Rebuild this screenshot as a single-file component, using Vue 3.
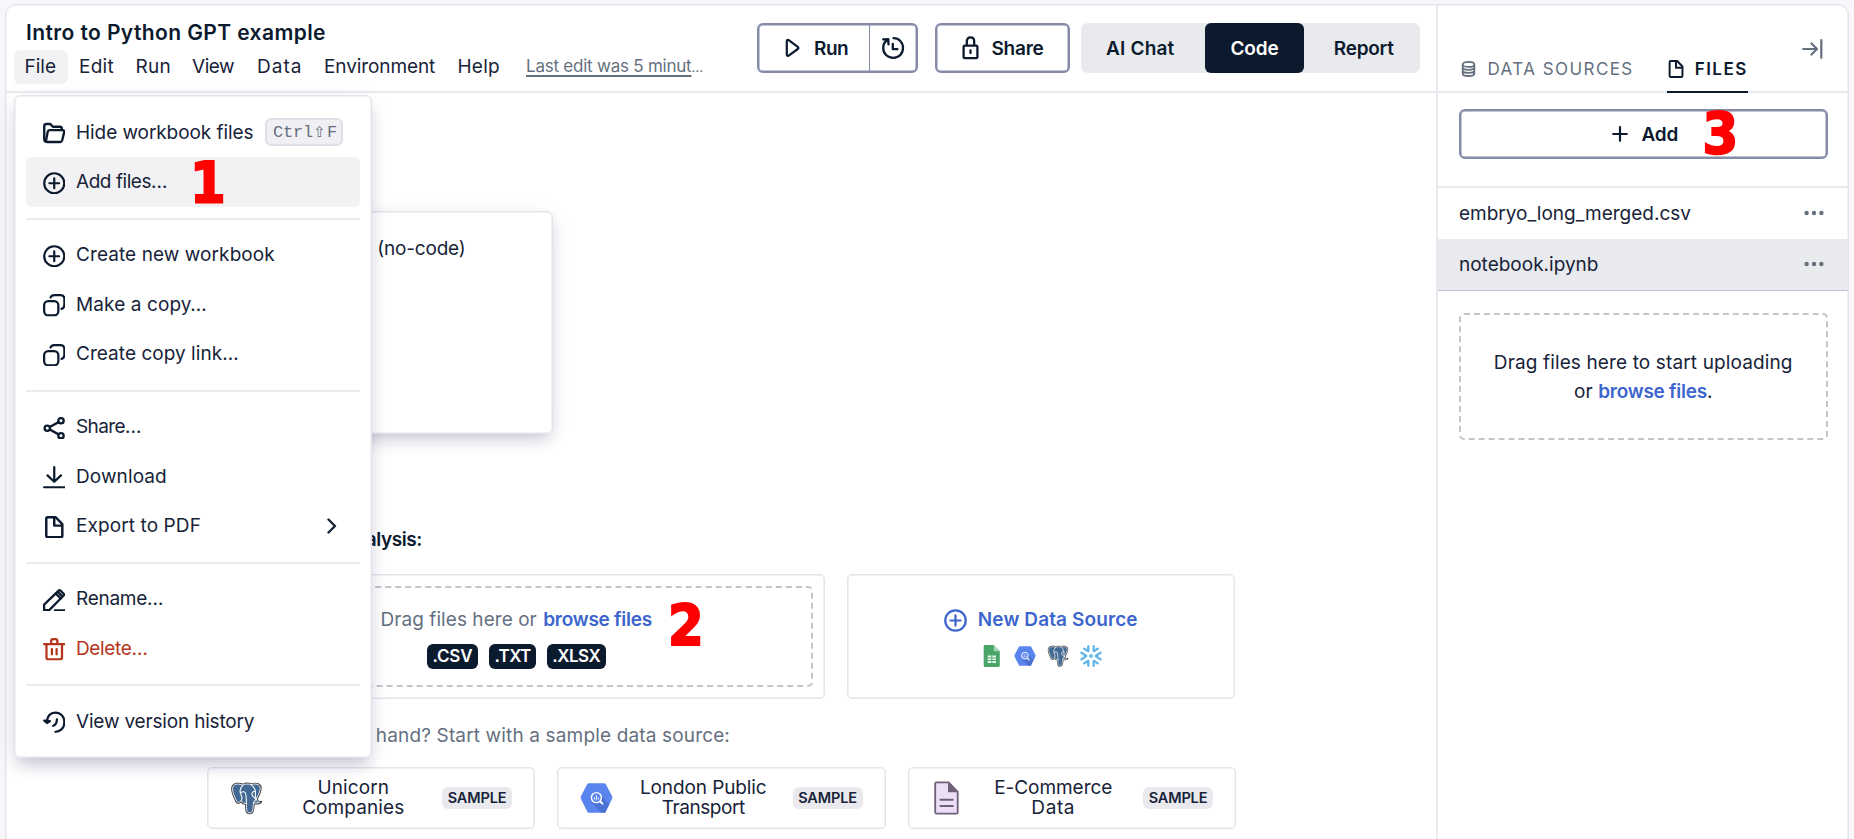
<script setup>
const menubar = [
  { label: 'File', x: 'file' },
  { label: 'Edit', x: 'edit' },
  { label: 'Run', x: 'run' },
  { label: 'View', x: 'view' },
  { label: 'Data', x: 'data' },
  { label: 'Environment', x: 'environment' },
  { label: 'Help', x: 'help' },
]

const groups = [
  [
    { icon: 'folder', label: 'Hide workbook files', cls: 'hide', kbd: ['Ctrl', '⇧', 'F'] },
    { icon: 'plus', label: 'Add files…', cls: 'add', active: true },
  ],
  [
    { icon: 'plus', label: 'Create new workbook', cls: 'create' },
    { icon: 'copy', label: 'Make a copy…', cls: 'make' },
    { icon: 'copy', label: 'Create copy link…', cls: 'link' },
  ],
  [
    { icon: 'share', label: 'Share…', cls: 'share' },
    { icon: 'download', label: 'Download', cls: 'download' },
    { icon: 'file', label: 'Export to PDF', cls: 'export', chevron: true },
  ],
  [
    { icon: 'pen', label: 'Rename…', cls: 'rename' },
    { icon: 'trash', label: 'Delete…', cls: 'delete', danger: true },
  ],
  [{ icon: 'history', label: 'View version history', cls: 'history' }],
]

const samples = [
  { logo: 'postgres', lines: ['Unicorn', 'Companies'], cls: 'unicorn' },
  { logo: 'bigquery', lines: ['London Public', 'Transport'], cls: 'london' },
  { logo: 'doc', lines: ['E-Commerce', 'Data'], cls: 'ecommerce' },
]

const files = [
  { name: 'embryo_long_merged.csv' },
  { name: 'notebook.ipynb', selected: true },
]
</script>

<template>
  <div class="app">
    <svg class="defs" width="0" height="0" aria-hidden="true">
      <defs>
        <symbol id="i-folder" viewBox="0 0 22 22">
          <g fill="none" stroke="currentColor" stroke-width="2.3" stroke-linejoin="round" stroke-linecap="round">
            <path d="M3 19.4C1.8 19 1.2 18.2 1.2 17V4.2C1.2 2.8 2.1 2 3.4 2H7.2L9.6 4.6H16.3C17.6 4.6 18.4 5.4 18.4 6.6V7.6" />
            <path d="M6.4 8H19.2C20.4 8 21 8.8 20.7 9.9L18.8 17.9C18.5 19 17.9 19.6 16.8 19.6H4.4C3.2 19.6 2.7 18.8 3 17.8L4.6 9.6C4.8 8.5 5.4 8 6.4 8Z" />
          </g>
        </symbol>
        <symbol id="i-plus" viewBox="0 0 22 22">
          <g fill="none" stroke="currentColor" stroke-width="2.15" stroke-linecap="round">
            <circle cx="11" cy="11" r="9.8" />
            <path d="M11 6.2V15.8M6.2 11H15.8" />
          </g>
        </symbol>
        <symbol id="i-copy" viewBox="0 0 22 22">
          <g fill="none" stroke="currentColor" stroke-width="2.2" stroke-linecap="round">
            <rect x="1.1" y="7" width="13.9" height="13.9" rx="4" />
            <path d="M7.4 3.4C8 1.8 9.2 1.1 11 1.1H16.9C19.4 1.1 20.9 2.5 20.9 5V10.5C20.9 12.6 20 14 18.2 14.5" />
          </g>
        </symbol>
        <symbol id="i-share" viewBox="0 0 22 22">
          <g fill="none" stroke="currentColor" stroke-width="2.3">
            <circle cx="17.6" cy="3.7" r="2.6" />
            <circle cx="4.2" cy="11" r="2.6" />
            <circle cx="17.6" cy="18.3" r="2.6" />
            <path d="M6.6 9.7L15.2 5M6.6 12.3L15.2 17" />
          </g>
        </symbol>
        <symbol id="i-download" viewBox="0 0 22 22">
          <path d="M11 1.1V15M4.4 9.2L11 15.4L17.6 9.2M1.1 20.800H20.900" fill="none" stroke="currentColor" stroke-width="2.2" stroke-linecap="round" stroke-linejoin="round" />
        </symbol>
        <symbol id="i-file" viewBox="0 0 22 22">
          <g fill="none" stroke="currentColor" stroke-width="2.4" stroke-linejoin="round">
            <path d="M4.600 1.200H12.400L18.900 8V19.200C18.900 20.200 18.300 20.800 17.300 20.800H4.800C3.800 20.800 3.200 20.200 3.200 19.200V2.700C3.200 1.800 3.700 1.200 4.600 1.200Z" />
            <path d="M11 1.600V9.400H18.600" />
          </g>
        </symbol>
        <symbol id="i-pen" viewBox="0 0 22 22">
          <g fill="none" stroke="currentColor" stroke-width="2.2" stroke-linejoin="round" stroke-linecap="round">
            <path d="M1.100 20.700V15.300L15.300 1.600C15.900 1 16.500 1 17.100 1.600L20.200 4.600C20.800 5.200 20.800 5.800 20.200 6.400L6.600 20.200C6.300 20.500 6 20.700 5.500 20.700H1.100Z" />
            <path d="M12.600 4.600L17.300 9.200M11.600 20.800H20.900M15.400 3.600L18 6.200" />
          </g>
        </symbol>
        <symbol id="i-trash" viewBox="0 0 22 22">
          <g fill="none" stroke="currentColor" stroke-width="2.2" stroke-linejoin="round" stroke-linecap="round">
            <path d="M1.100 6H20.900M3.400 6V19C3.400 20.200 4 20.900 5.300 20.900H16.700C18 20.900 18.600 20.200 18.600 19V6M8 5.400V3.200C8 1.800 8.600 1.100 10 1.100H12C13.400 1.100 14 1.800 14 3.200V5.400M8.700 10.800V16M13.300 10.800V16" />
          </g>
        </symbol>
        <symbol id="i-history" viewBox="0 0 22 22">
          <g fill="none" stroke="currentColor" stroke-width="2.200" stroke-linecap="round" stroke-linejoin="round">
            <path d="M3.600 10.400C4.400 4.800 7.600 1.500 12 1.500C17.200 1.500 20.900 5.600 20.900 10.900C20.900 16.400 17.200 20.300 12.200 20.300" />
            <path d="M1.200 9.400L3.900 11.700L6.800 9.800Z" fill="currentColor" />
            <path d="M13.600 8.200C13.600 11.200 12.800 13.200 10 14.400" />
          </g>
        </symbol>
        <symbol id="i-postgres" viewBox="0 0 34 34">
          <path d="M1.200 7C1.400 3 5 .8 9 1.300C11 1.500 12 1.800 13.200 2.200C16 .9 19 .8 21.600 1.800C25.500 .6 30 1 32 3.800C34 7.600 31 14 28.600 18C29.600 20.200 31 20.200 33 20C33.600 22.600 29.500 24 25.400 23.700C25 28 25.300 33.500 20.600 33.800C15.800 34 15.600 30 15.600 24C13.600 23.600 12 22.600 11.200 21.600C9.500 24 6.500 23.400 5 19.800C3 15.400 1 11 1.200 7Z" fill="#3b3b3b" />
          <path d="M2.600 7C2.800 3.800 5.800 2.200 9.200 2.700C11 2.900 12 3.200 13.300 3.700C16 2.300 19 2.200 21.600 3.200C25.200 2 29 2.400 30.700 4.700C32.200 7.800 29.500 13.600 27.200 17.600C27.400 20 28.800 21.200 30.600 21.300C29.200 22.300 26.500 22.500 24.200 22C23.600 27 24.200 32.200 20.600 32.400C16.800 32.600 17 28.600 17 22.800C14.800 23 12.600 21.600 11.600 19.600C9.800 22.400 7.400 22 6.200 19.200C4.400 15 2.400 10.800 2.600 7Z" fill="#426894" stroke="#fff" stroke-width=".9" />
          <path d="M13.300 3.700C10 7 10 11 11.400 13.600C12.800 16.500 12.600 18 11.600 19.600M21.600 3.200C25.400 6 26.500 9.500 26.200 12.600C26 15 26.200 16.600 27.200 17.600C26.200 19.400 24.800 20.600 24.200 22M11.200 11.400C13 10.200 15 10.200 16 12C17 15 16.600 20 17 22.800M26.200 10.600C24.500 10 22.800 10.600 22.600 12.600C22.400 14.800 24 16 26.200 17.600" fill="none" stroke="#fff" stroke-width="1.100" stroke-linecap="round" />
        </symbol>
        <symbol id="i-bigquery" viewBox="0 0 33 32">
          <path d="M9.200 1.200H23.800C24.800 1.200 25.300 1.500 25.800 2.300L32 14C32.500 15 32.500 16 32 17L25.800 29.500C25.400 30.400 24.800 30.800 23.800 30.800H9.200C8.200 30.800 7.600 30.400 7.200 29.500L1 17C.5 16 .5 15 1 14L7.200 2.300C7.700 1.500 8.200 1.200 9.200 1.200Z" fill="#5a84ee" />
          <path d="M20.500 12.500L29.200 22.500L25.800 29.500C25.400 30.400 24.800 30.800 23.800 30.800H21.500L12 20.800Z" fill="#4b71d2" />
          <circle cx="16.400" cy="15.600" r="5" fill="#5a84ee" stroke="#fff" stroke-width="1.400" />
          <path d="M20.300 19.500L22.400 21.700" stroke="#fff" stroke-width="1.900" stroke-linecap="round" />
          <path d="M14.400 15.400V17.400M16.400 13.400V18.300M18.400 15.800V17.400" stroke="#fff" stroke-width="1" />
        </symbol>
        <symbol id="i-doc" viewBox="0 0 25 34">
          <path d="M2.600 1.300H14.600L23.700 10.800V31.200C23.700 32.100 23.200 32.700 22.300 32.700H2.600C1.700 32.700 1.200 32.100 1.200 31.200V2.700C1.200 1.800 1.700 1.300 2.600 1.300Z" fill="#ebdef5" stroke="#6d6078" stroke-width="1.800" />
          <path d="M14 1.300V11.300H23.700Z" fill="#6d6078" />
          <path d="M6.400 18.700H18.800M6.400 25H18.800" stroke="#6d6078" stroke-width="2" stroke-linecap="round" />
        </symbol>
      </defs>
    </svg>

    <div class="frame">
      <main class="main">
        <header class="top">
          <div class="heading">
            <h1>Intro to Python GPT example</h1>
            <nav class="menubar">
              <span v-for="m in menubar" :key="m.label" :class="['mb', m.x]">{{ m.label }}</span>
              <span class="last"><u>Last edit was 5 minut</u><small>…</small></span>
            </nav>
          </div>
          <div class="actions">
            <div class="btn run-btn">
              <span class="run-main">
                <svg width="16" height="20" viewBox="0 0 16 20"><path d="M1.800 3.200C1.800 2.100 2.800 1.600 3.700 2.200L12.800 8.800C13.600 9.400 13.600 10.400 12.800 11L3.700 17.700C2.800 18.300 1.800 17.800 1.800 16.700Z" fill="none" stroke="currentColor" stroke-width="2.200" /></svg>
                <b>Run</b>
              </span>
              <span class="run-side">
                <svg width="24" height="24" viewBox="0 0 24 24" fill="none" stroke="currentColor" stroke-width="2.300" stroke-linecap="round" stroke-linejoin="round"><path d="M12.600 2.200C18 2.200 22 6.400 22 12C22 17.600 18 21.800 12.200 21.800C6.400 21.800 2.200 17.600 2.200 12C2.200 8.600 3.700 5.600 6.600 3.700M2.200 3.400L7.300 3.200L7.500 8.400M11.800 8V13.200H16.400" /></svg>
              </span>
            </div>
            <div class="btn share-btn">
              <svg width="17" height="24" viewBox="0 0 17 24" fill="none" stroke="currentColor" stroke-width="2.300" stroke-linecap="round"><rect x="1.600" y="9.600" width="13.800" height="12.600" rx="1.200" /><path d="M4.800 9V5.400C4.800 3 6.200 1.400 8.500 1.400C10.800 1.400 12.200 3 12.200 5.400V9M8.500 14.400V17" /></svg>
              <b>Share</b>
            </div>
            <div class="toggle">
              <b class="t-chat">AI Chat</b>
              <b class="t-code">Code</b>
              <b class="t-report">Report</b>
            </div>
          </div>
        </header>

        <section class="canvas">
          <div class="popup"><span>(no-code)</span></div>

          <h2>analysis:</h2>
          <div class="row">
            <div class="card upload">
              <div class="dashed">
                <p class="drag">Drag files here or <b>browse files</b></p>
                <div class="chips"><b>.CSV</b><b>.TXT</b><b>.XLSX</b></div>
              </div>
            </div>
            <div class="card source">
              <div class="new"><svg width="23" height="23"><use href="#i-plus" /></svg><b>New Data Source</b></div>
              <div class="logos">
                <svg width="22" height="22" viewBox="0 0 22 22">
                  <path d="M4 0H12.500L18.800 6.200V20.600C18.800 21.400 18.300 22 17.500 22H4C3.200 22 2.700 21.400 2.700 20.600V1.400C2.700 .6 3.200 0 4 0Z" fill="#49a568" />
                  <path d="M12.800 0L18.800 6.200H12.800Z" fill="#a5d3b4" />
                  <path d="M6.700 10.500H15V18H6.700Z" fill="#e6f4ea" />
                  <path d="M6.700 13H15M6.700 15.500H15M10.800 10.500V18" stroke="#49a568" stroke-width=".9" />
                </svg>
                <svg width="22" height="22"><use href="#i-bigquery" /></svg>
                <svg width="22" height="22"><use href="#i-postgres" /></svg>
                <svg width="22" height="22" viewBox="0 0 22 22" fill="none" stroke="#5cb3e4" stroke-width="2.200" stroke-linecap="round" stroke-linejoin="round">
                  <path d="M8.300 1.200V6.200L4.200 3.600M13.700 1.200V6.200L17.800 3.600M8.300 20.800V15.800L4.200 18.400M13.700 20.800V15.800L17.800 18.400M1.400 7.600L6.300 11L1.400 14.400M20.600 7.600L15.700 11L20.600 14.400" />
                  <path d="M11 9.400L12.600 11L11 12.600L9.400 11Z" stroke-width="1.200" />
                </svg>
              </div>
            </div>
          </div>
          <p class="hint">No data at hand? Start with a sample data source:</p>
          <div class="row samples">
            <div v-for="s in samples" :key="s.cls" :class="['card', 'sample', s.cls]">
              <svg class="logo"><use :href="'#i-' + s.logo" /></svg>
              <div class="name"><span v-for="l in s.lines" :key="l">{{ l }}</span></div>
              <b class="tag">SAMPLE</b>
            </div>
          </div>
        </section>
      </main>

      <aside class="side">
        <div class="tabs">
          <div class="tab">
            <svg width="15" height="16" viewBox="0 0 15 16" fill="none" stroke="currentColor" stroke-width="1.800"><ellipse cx="7.500" cy="3.400" rx="5.800" ry="2.500" /><path d="M1.700 3.400V12.400C1.700 13.900 4.200 15 7.500 15C10.800 15 13.300 13.900 13.300 12.400V3.400M1.700 6.600C1.700 8 4.200 8.800 7.500 8.800C10.800 8.800 13.300 8 13.300 6.600M1.700 9.600C1.700 11 4.200 11.900 7.500 11.900C10.800 11.900 13.300 11 13.300 9.600" /></svg>
            <span>DATA SOURCES</span>
          </div>
          <div class="tab on">
            <svg width="18" height="18"><use href="#i-file" /></svg>
            <span>FILES</span>
          </div>
          <svg class="collapse" width="21" height="20" viewBox="0 0 21 20" fill="none" stroke="currentColor" stroke-width="2.200" stroke-linecap="round" stroke-linejoin="round"><path d="M1.200 10H14.500M9.500 4.400L15 10L9.500 15.600M19.300 1.200V18.800" /></svg>
        </div>
        <div class="add-wrap">
          <div class="btn add-btn">
            <svg width="16" height="16" viewBox="0 0 16 16"><path d="M8 1.200V14.800M1.200 8H14.800" stroke="currentColor" stroke-width="2.200" stroke-linecap="round" /></svg>
            <b>Add</b>
            <span class="mark m3">3</span>
          </div>
        </div>
        <div v-for="f in files" :key="f.name" :class="['file', { selected: f.selected }]">
          <span>{{ f.name }}</span>
          <svg width="20" height="6" viewBox="0 0 20 6" fill="#65707f"><circle cx="2.600" cy="3" r="2.200" /><circle cx="10" cy="3" r="2.200" /><circle cx="17.400" cy="3" r="2.200" /></svg>
        </div>
        <div class="drop">
          <p>Drag files here to start uploading</p>
          <p class="l2">or <b>browse files</b>.</p>
        </div>
      </aside>
    </div>

    <div class="menu">
      <div v-for="(g, gi) in groups" :key="gi" class="group">
        <div v-for="it in g" :key="it.label" :class="['item', it.cls, { active: it.active, danger: it.danger }]">
          <svg class="ico"><use :href="'#i-' + it.icon" /></svg>
          <span class="lbl">{{ it.label }}</span>
          <span v-if="it.kbd" class="kbd"><span v-for="k in it.kbd" :key="k">{{ k }}</span></span>
          <svg v-if="it.chevron" class="chev" width="10" height="16" viewBox="0 0 10 16"><path d="M1.500 1.500L8 8L1.500 14.500" fill="none" stroke="currentColor" stroke-width="2.400" stroke-linecap="round" stroke-linejoin="round" /></svg>
          <span v-if="it.active" class="mark m1">1</span>
        </div>
      </div>
    </div>
    <span class="mark m2">2</span>
  </div>
</template>

<style>
html, body { margin: 0; overflow: hidden; }
</style>

<style scoped>
* { box-sizing: border-box; }
.app {
  position: relative; width: 1854px; height: 839px; overflow: hidden; background: #f7f7fb;
  padding: 3.500px 5px 0 4.500px; color: #172339; font: 400 19px/24px Inter, "Liberation Sans", sans-serif;
}
.defs { position: absolute; }
h1, h2, p { margin: 0; }
svg { display: block; flex: none; }
b { font-weight: 600; }
.frame { display: flex; height: 860px; background: #fff; border: 1px solid #e4e4eb; border-radius: 11px; box-shadow: inset 0 0 0 .5px #e4e4eb; }
.main { flex: 1; min-width: 0; }
.top { display: flex; height: 88px; border-bottom: 2px solid #e9e9ef; }
.heading { flex: 1; padding: 15px 0 0 20.500px; }
h1 { font-size: 21px; font-weight: 600; line-height: 26px; letter-spacing: .4px; color: #0c1a2e; white-space: nowrap; }
.menubar { display: flex; margin: 4.500px 0 0 -12px; white-space: nowrap; line-height: 34px; }
.mb { padding: 0 11.500px; }
.mb.file { height: 34px; width: 53.500px; padding: 0 0 0 10.500px; border-radius: 6px; background: #f2f2f5; }
.mb.edit { width: 56.500px; letter-spacing: .28px; }
.mb.run { width: 56.500px; letter-spacing: .25px; }
.mb.view { width: 65px; letter-spacing: -.45px; }
.mb.data { width: 67px; letter-spacing: 1px; }
.mb.environment { width: 133.500px; letter-spacing: -.1px; }
.mb.help { width: 68px; letter-spacing: .23px; }
.last { font-size: 17px; letter-spacing: -.23px; color: #65707f; line-height: 33px; padding-left: 12px; }
.last u { text-underline-offset: 2.500px; text-decoration-thickness: 1.500px; }
.last small { font-size: 13.500px; }
.actions { display: flex; height: 50px; margin: 18.500px 16px 0 0; gap: 17px; color: #0c1a2e; }
.actions b { position: relative; }
.btn { display: flex; align-items: center; border: 2px solid #868aa9; border-radius: 6px; background: #fff; color: #0c1a2e; box-shadow: inset 0 0 0 .5px #868aa9; }
.run-btn { width: 161px; }
.run-main { display: flex; align-items: center; gap: 13px; height: 100%; width: 111px; padding-left: 26.500px; border-right: 1px solid #868aa9; }
.run-main b { letter-spacing: -.5px; }
.run-side { padding-left: 11px; }
.share-btn { width: 135px; padding-left: 25px; gap: 13px; }
.share-btn b { letter-spacing: -.25px; }
.btn b { padding-top: 1px; }
.toggle { display: flex; width: 339px; height: 50px; margin-left: -6px; border-radius: 7px; background: #e9eaee; line-height: 51px; text-align: center; }
.t-chat { width: 124.500px; padding-right: 5px; letter-spacing: .2px; }
.t-code { width: 99px; background: #0c1a2e; color: #fff; border-radius: 6px; letter-spacing: -.14px; }
.t-report { width: 115.500px; padding-left: 4px; letter-spacing: -.24px; }

.canvas { position: relative; padding: 0 0 0 201px; }
.popup { position: absolute; left: 201px; top: 118px; width: 346px; height: 223px; border: 1px solid #e4e4eb; border-radius: 6px; background: #fff; box-shadow: inset 0 0 0 .5px #e4e4eb, 0 8px 16px -4px rgba(20, 20, 80, .22), 0 4px 26px rgba(20, 20, 80, .05); padding: 25px 86px 0 0; text-align: right; letter-spacing: -.2px; }
h2 { width: 215.500px; padding-top: 435px; font-size: 19px; line-height: 24px; font-weight: 600; letter-spacing: -.4px; text-align: right; color: #0c1a2e; }
.row { display: flex; gap: 22px; }
.card { border: 1px solid #e4e4eb; border-radius: 5px; background: #fff; box-shadow: inset 0 0 0 .5px #e4e4eb; }
.upload { width: 618px; height: 125.500px; margin-top: 22px; padding: 11.500px 10.500px 11.500px 12px; }
.dashed { height: 100%; border: 2px dashed #c3c5cb; border-radius: 5px; padding-top: 19.500px; text-align: center; }
.drag { color: #65707f; letter-spacing: .05px; }
.drag b { color: #3c66cc; letter-spacing: -.26px; margin-left: 1px; }
.chips { display: flex; justify-content: center; gap: 11px; margin-top: 12px; }
.chips b { height: 25px; line-height: 25px; border-radius: 6px; background: #0c1a2e; color: #fff; font-size: 17px; text-align: center; }
.chips b:nth-child(1) { width: 51px; letter-spacing: -.1px; }
.chips b:nth-child(2) { width: 47px; letter-spacing: -.7px; }
.chips b:nth-child(3) { width: 58.500px; letter-spacing: -.5px; }
.source { width: 388.500px; height: 125.500px; margin-top: 22px; padding-top: 33.500px; }
.new { display: flex; justify-content: center; align-items: center; gap: 11px; color: #3c66cc; letter-spacing: .11px; }
.logos { display: flex; justify-content: center; gap: 11px; margin-top: 12.500px; padding-left: 2px; }
.hint { width: 523.500px; margin-top: 25px; color: #65707f; white-space: nowrap; text-align: right; letter-spacing: .15px; }
.samples { margin-top: 18.500px; }
.sample { display: flex; align-items: center; justify-content: space-between; width: 328.500px; height: 62.500px; padding: 0 22px; }
.logo { width: 33px; height: 34px; }
.name { display: flex; flex-direction: column; align-items: center; line-height: 19.500px; position: relative; }
.unicorn .name { letter-spacing: .1px; margin-right: -2px; }
.london .name { letter-spacing: -.1px; margin-left: 1px; }
.london .name span:last-child { letter-spacing: -.45px; }
.ecommerce .name { letter-spacing: -.05px; margin-left: 5px; }
.ecommerce .name span:last-child { letter-spacing: .6px; }
.ecommerce .logo { width: 25px; margin-left: 3px; }
.tag { height: 22px; width: 70px; line-height: 22px; border-radius: 6px; background: #e9e9ee; font-size: 14.500px; letter-spacing: -.15px; text-align: center; }

.side { width: 412.500px; border-left: 2px solid #e9e9ef; }
.tabs { position: relative; display: flex; height: 88px; border-bottom: 2px solid #e9e9ef; padding: 0 0 0 23px; }
.tab { display: flex; align-items: center; height: 40px; margin-top: 46px; padding-bottom: 3px; font-size: 17px; letter-spacing: 1.430px; color: #65707f; white-space: nowrap; }
.tab span { margin-left: 12px; }
.tab.on { margin-top: 47px; margin-left: 33px; width: 81px; font-weight: 600; letter-spacing: 1.470px; color: #0c1a2e; border-bottom: 2px solid #0c1a2e; height: 41px; padding-bottom: 4px; }
.tab.on span { margin-left: 10px; }
.collapse { margin: 34.500px 25px 0 auto; color: #65707f; }
.add-wrap { height: 95px; padding: 16.500px 20px 0 21px; border-bottom: 2px solid #e9e9ef; }
.add-btn { position: relative; height: 50px; padding-left: 151px; gap: 14px; letter-spacing: -.2px; }
.side .file { display: flex; align-items: center; justify-content: space-between; height: 51px; padding: 0 24px 0 21.500px; }
.side .file span { padding-top: 1.500px; }
.side .file.selected { height: 52px; background: #e9eaee; border-bottom: 1px solid #c0c0d2; }
.drop { height: 127px; margin: 22px 20px 0 21px; border: 2px dashed #c3c5cb; border-radius: 5px; padding-top: 33.500px; text-align: center; line-height: 29px; letter-spacing: .13px; }
.l2 b { color: #3c66cc; letter-spacing: -.26px; }

.menu { position: absolute; left: 14px; top: 95px; width: 357.500px; height: 662.500px; border: 1px solid #e4e4eb; border-radius: 6px; background: #fff; padding: 11.500px 10.500px 11px 11px; box-shadow: inset 0 0 0 .5px #e4e4eb, 0 10px 16px -4px rgba(20, 20, 80, .22), 0 4px 26px rgba(20, 20, 80, .06); }
.group + .group { margin-top: 11px; border-top: 2px solid #e9e9ef; padding-top: 10.500px; }
.item { position: relative; display: flex; align-items: center; height: 49.500px; padding-left: 16.500px; border-radius: 6px; color: #172339; white-space: nowrap; }
.item.active { background: #f2f2f5; }
.ico { width: 22.500px; height: 22.500px; color: #0c1a2e; position: relative; top: 1px; }
.lbl { margin-left: 11px; padding-top: 1px; }
.danger, .danger .ico { color: #b5341c; }
.hide { letter-spacing: -.07px; }
.add { letter-spacing: -.45px; }
.create { letter-spacing: .08px; }
.make { letter-spacing: .1px; }
.link { letter-spacing: .04px; }
.item.share { letter-spacing: -.6px; }
.download, .export { letter-spacing: .1px; }
.rename { letter-spacing: -.27px; }
.delete { letter-spacing: -.35px; }
.history { letter-spacing: -.18px; }
.kbd { display: flex; align-items: center; height: 28px; width: 78px; margin-left: 12px; padding-left: 5.500px; border: 2px solid #dedee7; border-radius: 6px; background: #f0f0f4; color: #65707f; font: 17px "Liberation Mono", "DejaVu Sans Mono", monospace; letter-spacing: -.2px; }
.kbd span:nth-child(2) { width: 13px; text-align: center; font: 15px "DejaVu Sans", sans-serif; }
.kbd span:nth-child(3) { margin-left: 1px; }
.chev { margin-left: auto; margin-right: 23px; }

.mark { position: absolute; color: #fe0000; font: bold condensed 57px/60px "DejaVu Sans Condensed", "DejaVu Sans", sans-serif; letter-spacing: 0; -webkit-text-stroke: 2px #fe0000; stroke-linejoin: round; }
.m1 { left: 164px; top: -4px; }
.m2 { left: 668px; top: 596px; }
.m3 { left: 242px; top: -7px; }
</style>
